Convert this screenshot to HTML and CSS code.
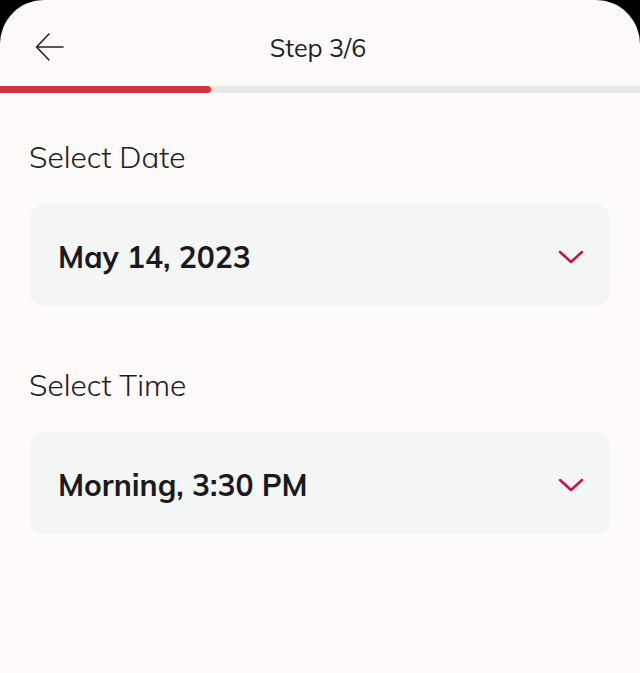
FILE: index.html
```html
<!DOCTYPE html>
<html>
<head>
<meta charset="utf-8">
<link rel="stylesheet" href="styles.css">
</head>
<body>
<div class="screen">
  <header class="topbar">
    <button class="back" aria-label="Back">
      <svg width="30" height="30" viewBox="0 0 30 30" fill="none" stroke="#222" stroke-width="1.6" stroke-linecap="round" stroke-linejoin="round"><path d="M28 15H2M14 2L1.5 15L14 28"/></svg>
    </button>
    <div class="title">Step 3/6</div>
  </header>
  <div class="progress"><div class="progress-fill" style="width:211px"></div></div>
  <main class="content">
    <section class="field">
      <div class="label">Select Date</div>
      <div class="select">
        <span class="value">May 14, 2023</span>
        <svg class="chev" width="26" height="16" viewBox="0 0 26 16" fill="none" stroke="#c4134f" stroke-width="2.5" stroke-linecap="round" stroke-linejoin="round"><path d="M2 3L13 13L24 3"/></svg>
      </div>
    </section>
    <section class="field">
      <div class="label">Select Time</div>
      <div class="select">
        <span class="value">Morning, 3:30 PM</span>
        <svg class="chev" width="26" height="16" viewBox="0 0 26 16" fill="none" stroke="#c4134f" stroke-width="2.5" stroke-linecap="round" stroke-linejoin="round"><path d="M2 3L13 13L24 3"/></svg>
      </div>
    </section>
  </main>
</div>
</body>
</html>
```

FILE: styles.css
```css
html, body {
  margin: 0;
  padding: 0;
  background: #000;
}
body {
  font-family: "Mulish", "Lato", "Noto Sans", sans-serif;
  color: #1b1b1f;
}
.screen {
  width: 640px;
  height: 673px;
  background: #fffafa;
  border-radius: 44px 44px 0 0;
  overflow: hidden;
}
.topbar {
  height: 86px;
  display: flex;
  align-items: center;
  padding: 8px 0 0 34px;
  box-sizing: border-box;
}
.back {
  background: none;
  border: none;
  padding: 0;
  width: 32px;
  height: 32px;
  display: flex;
  align-items: center;
  justify-content: center;
}
.title {
  flex: 1;
  text-align: center;
  font-size: 25px;
  font-weight: 400;
  color: #222;
  margin-right: 70px;
}
.progress {
  height: 7px;
  background: #e6e6e6;
}
.progress-fill {
  height: 100%;
  background: #d2363a;
  border-radius: 0 4px 4px 0;
}
.content {
  padding: 46px 29px 0 29px;
  display: flex;
  flex-direction: column;
  gap: 61px;
}
.field {
  display: flex;
  flex-direction: column;
  gap: 29px;
}
.label {
  font-size: 30px;
  line-height: 36px;
  font-weight: 300;
  color: #1e1e22;
}
.select {
  height: 102px;
  box-sizing: border-box;
  background: #f4f5f5;
  border-radius: 16px;
  display: flex;
  align-items: center;
  justify-content: space-between;
  padding: 4px 27px 0 29px;
}
.value {
  font-size: 30px;
  font-weight: 700;
  color: #1a1a1e;
}
.chev { display: block; }
```
